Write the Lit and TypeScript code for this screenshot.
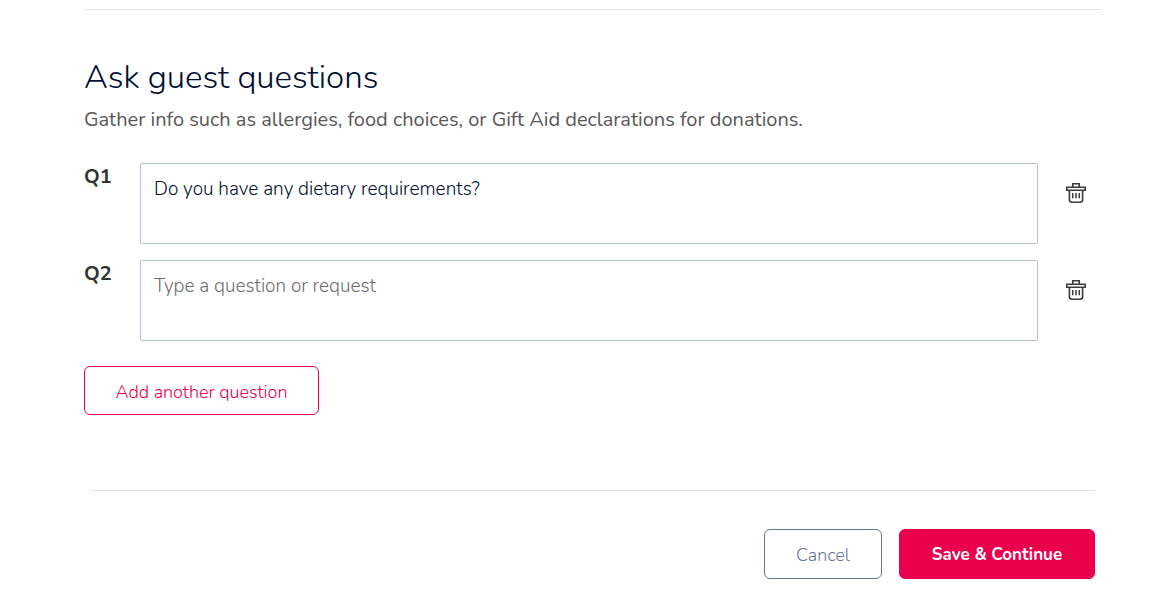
import { LitElement, html, css } from "lit";
import { customElement, state } from "lit/decorators.js";

@customElement("app-root")
export class AppRoot extends LitElement {
  @state() private questions: string[] = ["Do you have any dietary requirements?", ""];

  static styles = css`
    :host {
      display: block;
      background: #fff;
      color: #333;
      font-family: Nunito, "Open Sans", "Noto Sans", sans-serif;
      font-size: 20px;
    }
    * {
      box-sizing: border-box;
    }
    .page {
      padding: 9px 52px 24px 84px;
    }
    .rule {
      border: 0;
      border-top: 1px solid #e5e5e5;
      margin: 0;
    }
    .title {
      margin: 44px 0 0;
      font-size: 33px;
      line-height: 48px;
      font-weight: 300;
      color: #000f30;
    }
    .intro {
      margin: 4px 0 0;
      line-height: 28px;
      font-weight: 400;
      color: #585858;
    }
    .list {
      display: grid;
      gap: 16px;
      margin: 29px 0 25px;
      padding: 0;
      list-style: none;
    }
    .row {
      display: grid;
      grid-template-columns: 56px 1fr 63px;
      align-items: start;
    }
    .label {
      line-height: 28px;
      font-weight: 700;
    }
    .field {
      display: block;
      width: 100%;
      height: 81px;
      padding: 12px 13px;
      border: 1px solid #b6c1db;
      border-radius: 2px;
      resize: none;
      background: #fff;
      color: #000f30;
      font-family: inherit;
      font-size: 19px;
      line-height: 26px;
      font-weight: 300;
    }
    .field::placeholder {
      color: #6c6c6c;
      opacity: 1;
    }
    .remove {
      justify-self: center;
      display: flex;
      margin: 16px 0 0 13px;
      padding: 4px;
      border: 0;
      background: none;
      cursor: pointer;
    }
    .button {
      height: 50px;
      padding: 2px 30px 0;
      border: 1px solid;
      border-radius: 6px;
      background: #fff;
      font-family: inherit;
      font-size: 18px;
      line-height: 24px;
      font-weight: 300;
      cursor: pointer;
    }
    .add {
      min-width: 235px;
      height: 49px;
      border-color: #eb004e;
      color: #eb004e;
    }
    .footer {
      margin: 75px 6px 0;
    }
    .actions {
      display: flex;
      justify-content: flex-end;
      gap: 17px;
      padding-top: 38px;
    }
    .cancel {
      min-width: 118px;
      border-color: #66759a;
      color: #66759a;
    }
    .save {
      min-width: 196px;
      border-color: #eb004e;
      background: #eb004e;
      color: #fff;
      font-size: 17px;
      font-weight: 700;
    }
  `;

  private addQuestion() {
    this.questions = [...this.questions, ""];
  }

  private removeQuestion(index: number) {
    this.questions = this.questions.filter((_, i) => i !== index);
  }

  private updateQuestion(index: number, event: Event) {
    const text = (event.target as HTMLTextAreaElement).value;
    this.questions = this.questions.map((q, i) => (i === index ? text : q));
  }

  private trashIcon() {
    return html`<svg width="20" height="20" viewBox="0 0 20 20" fill="none" stroke="#3c3c3c" stroke-width="1.6" aria-hidden="true">
      <path d="M6.8 4V.8h6.4V4" />
      <path d="M.8 4.2h18.4v3H.8z" />
      <path d="M3.4 8v8.7q0 2.5 2.5 2.5h8.2q2.5 0 2.5-2.5V8" />
      <path d="M6.7 10v5.2M10 10v5.2M13.3 10v5.2" stroke-width="1.5" />
    </svg>`;
  }

  render() {
    return html`
      <main class="page">
        <hr class="rule" />
        <h2 class="title">Ask guest questions</h2>
        <p class="intro">Gather info such as allergies, food choices, or Gift Aid declarations for donations.</p>
        <ul class="list">
          ${this.questions.map(
            (text, i) => html`<li class="row">
              <label class="label" for="question-${i}">Q${i + 1}</label>
              <textarea
                class="field"
                id="question-${i}"
                placeholder="Type a question or request"
                .value=${text}
                @input=${(e: Event) => this.updateQuestion(i, e)}
              ></textarea>
              <button class="remove" type="button" aria-label="Remove question ${i + 1}" @click=${() => this.removeQuestion(i)}>
                ${this.trashIcon()}
              </button>
            </li>`
          )}
        </ul>
        <button class="button add" type="button" @click=${this.addQuestion}>Add another question</button>
        <footer class="footer">
          <hr class="rule" />
          <div class="actions">
            <button class="button cancel" type="button">Cancel</button>
            <button class="button save" type="submit">Save &amp; Continue</button>
          </div>
        </footer>
      </main>
    `;
  }
}
